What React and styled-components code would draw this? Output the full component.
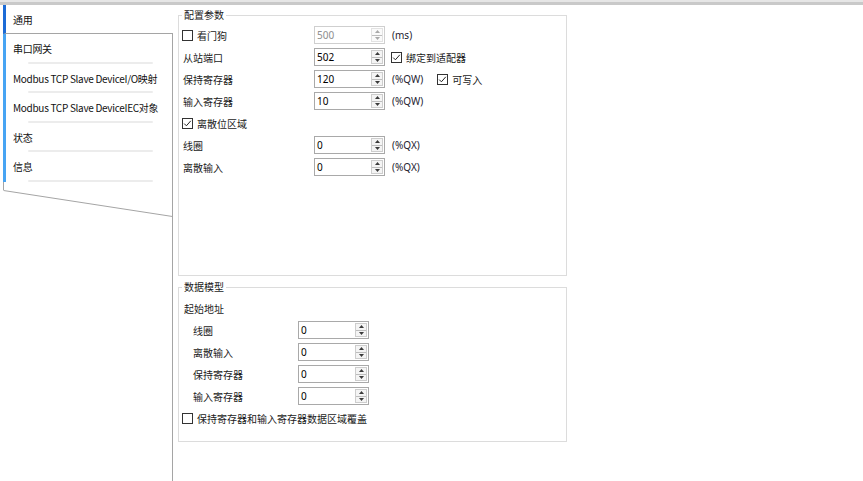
import React from "react";
import styled, { createGlobalStyle } from "styled-components";

const Global = createGlobalStyle`
  html, body { margin: 0; padding: 0; background: #fff; }
  body {
    font-family: "Noto Sans", "Noto Sans CJK SC", sans-serif;
    font-size: 10px;
    color: #1a1a1a;
  }
`;

const Page = styled.div`
  width: 863px;
  height: 481px;
  display: flex;
  flex-direction: column;
  overflow: hidden;
  background: #fff;
`;

const TopBar = styled.div`
  height: 5px;
  flex: none;
  background: linear-gradient(#e6e6e6 0 2px, #c9c9c9 2px);
`;

const Main = styled.div`
  flex: 1;
  display: flex;
  min-height: 0;
`;

const Sidebar = styled.nav`
  width: 173px;
  flex: none;
  box-sizing: border-box;
  padding-left: 3px;
  display: flex;
  flex-direction: column;
  position: relative;
  font-family: "Noto Sans CJK SC", sans-serif;
`;

const Tab = styled.div`
  height: ${(p) => (p.$active ? "29px" : "29.5px")};
  flex: none;
  box-sizing: border-box;
  display: flex;
  align-items: center;
  padding-left: 7px;
  position: relative;
  white-space: nowrap;
  font-size: 10px;
  letter-spacing: -0.3px;
  color: #111;
  border-left: 3px solid ${(p) => (p.$active ? "#1c6bd6" : "#47a4f3")};
  border-right: ${(p) => (p.$active ? "none" : "1px solid #a5a5a5")};
  border-bottom: ${(p) => (p.$active ? "1px solid #a5a5a5" : "none")};

  &::after {
    content: "";
    display: ${(p) => (p.$active ? "none" : "block")};
    position: absolute;
    left: 22px;
    right: 19px;
    bottom: 0;
    height: 2px;
    border-radius: 1px;
    background: #ececec;
  }
`;

const TabFoot = styled.div`
  height: 8.5px;
  flex: none;
  border-left: 1px solid #a5a5a5;
  border-right: 1px solid #a5a5a5;
`;

const Filler = styled.div`
  flex: 1;
  border-right: 1px solid #a5a5a5;
`;

const Slant = styled.svg`
  position: absolute;
  left: 3px;
  top: 185px;
  pointer-events: none;
`;

const Content = styled.section`
  flex: 1;
  box-sizing: border-box;
  padding: 3px 0 0 5px;
  display: flex;
  flex-direction: column;
  font-family: "Noto Sans", "Noto Sans CJK SC", sans-serif;
`;

const Group = styled.fieldset`
  width: 389px;
  height: ${(p) => p.$h}px;
  box-sizing: border-box;
  margin: ${(p) => p.$mt || 0}px 0 0 0;
  padding: ${(p) => p.$pt || 0}px 0 0 3px;
  border: 1px solid #dcdcdc;
  min-width: 0;
`;

const Legend = styled.legend`
  padding: 0 2px;
  font-size: 10px;
  line-height: 14px;
  color: #1a1a1a;
`;

const Row = styled.div`
  display: grid;
  grid-template-columns: ${(p) => p.$col}px 71px auto;
  align-items: center;
  height: 22px;
`;

const Label = styled.span`
  padding-left: ${(p) => p.$indent || 1}px;
  font-size: 10px;
  white-space: nowrap;
`;

const After = styled.div`
  display: flex;
  align-items: center;
  gap: 14px;
  margin-left: ${(p) => p.$ml ?? 7}px;
`;

const Unit = styled.span`
  font-size: 10px;
  color: #1d2230;
  white-space: nowrap;
`;

const CheckWrap = styled.label`
  display: inline-flex;
  align-items: center;
  gap: 4px;
  font-size: 10px;
  white-space: nowrap;
`;

const Box = styled.span`
  width: 11px;
  height: 11px;
  box-sizing: border-box;
  border: 1px solid #333;
  background: #fff;
  display: inline-flex;
  align-items: center;
  justify-content: center;
  flex: none;
`;

const Spin = styled.div`
  width: 71px;
  height: 18px;
  box-sizing: border-box;
  display: flex;
  border: 1px solid ${(p) => (p.$disabled ? "#cfcfcf" : "#a9a9a9")};
  background: #fff;
`;

const SpinValue = styled.div`
  flex: 1;
  display: flex;
  align-items: center;
  padding-left: 2px;
  font-size: 10px;
  color: ${(p) => (p.$disabled ? "#8e8e8e" : "#000")};
`;

const SpinButtons = styled.div`
  width: 12px;
  margin: 1px;
  box-sizing: border-box;
  display: flex;
  flex-direction: column;
  border: 1px solid ${(p) => (p.$disabled ? "#e2e2e2" : "#cdcdcd")};
  background: ${(p) => (p.$disabled ? "#fafafa" : "#f4f4f4")};
`;

const SpinHalf = styled.div`
  flex: 1;
  display: flex;
  align-items: center;
  justify-content: center;
  & + & {
    border-top: 1px solid ${(p) => (p.$disabled ? "#e2e2e2" : "#bdbdbd")};
  }
`;

const Group2Body = styled.div`
  display: flex;
  flex-direction: column;
`;

const Arrow = ({ up, disabled }) => (
  <svg width="5" height="3" viewBox="0 0 5 3">
    <path
      d={up ? "M0 3 L2.5 0 L5 3 Z" : "M0 0 L2.5 3 L5 0 Z"}
      fill={disabled ? "#a8a8a8" : "#3a3a3a"}
    />
  </svg>
);

const SpinBox = ({ value, disabled }) => (
  <Spin $disabled={disabled}>
    <SpinValue $disabled={disabled}>{value}</SpinValue>
    <SpinButtons $disabled={disabled}>
      <SpinHalf $disabled={disabled}>
        <Arrow up disabled={disabled} />
      </SpinHalf>
      <SpinHalf $disabled={disabled}>
        <Arrow disabled={disabled} />
      </SpinHalf>
    </SpinButtons>
  </Spin>
);

const Check = ({ checked, children }) => (
  <CheckWrap>
    <Box>
      {checked && (
        <svg width="9" height="9" viewBox="0 0 9 9">
          <path d="M1.2 4.6 L3.4 6.8 L7.8 1.8" stroke="#222" strokeWidth="1" fill="none" />
        </svg>
      )}
    </Box>
    {children}
  </CheckWrap>
);

const tabs = [
  "通用",
  "串口网关",
  "Modbus TCP Slave DeviceI/O映射",
  "Modbus TCP Slave DeviceIEC对象",
  "状态",
  "信息",
];

export default function App() {
  return (
    <Page>
      <Global />
      <TopBar />
      <Main>
        <Sidebar>
          {tabs.map((t, i) => (
            <Tab key={t} $active={i === 0}>
              {t}
            </Tab>
          ))}
          <TabFoot />
          <Filler />
          <Slant width="170" height="28" viewBox="0 0 170 28">
            <line x1="0.5" y1="0.5" x2="169.5" y2="26.5" stroke="#a5a5a5" strokeWidth="1" />
          </Slant>
        </Sidebar>
        <Content>
          <Group $h={268} $pt={2}>
            <Legend>配置参数</Legend>
            <Row $col={132}>
              <Check>看门狗</Check>
              <SpinBox value="500" disabled />
              <After>
                <Unit>(ms)</Unit>
              </After>
            </Row>
            <Row $col={132}>
              <Label>从站端口</Label>
              <SpinBox value="502" />
              <After $ml={6}>
                <Check checked>绑定到适配器</Check>
              </After>
            </Row>
            <Row $col={132}>
              <Label>保持寄存器</Label>
              <SpinBox value="120" />
              <After>
                <Unit>(%QW)</Unit>
                <Check checked>可写入</Check>
              </After>
            </Row>
            <Row $col={132}>
              <Label>输入寄存器</Label>
              <SpinBox value="10" />
              <After>
                <Unit>(%QW)</Unit>
              </After>
            </Row>
            <Row $col={132}>
              <Check checked>离散位区域</Check>
            </Row>
            <Row $col={132}>
              <Label>线圈</Label>
              <SpinBox value="0" />
              <After>
                <Unit>(%QX)</Unit>
              </After>
            </Row>
            <Row $col={132}>
              <Label>离散输入</Label>
              <SpinBox value="0" />
              <After>
                <Unit>(%QX)</Unit>
              </After>
            </Row>
          </Group>
          <Group $h={162} $mt={4} $pt={3}>
            <Legend>数据模型</Legend>
            <Group2Body>
              <Row $col={116}>
                <Label $indent={2}>起始地址</Label>
              </Row>
              <Row $col={116}>
                <Label $indent={11}>线圈</Label>
                <SpinBox value="0" />
              </Row>
              <Row $col={116}>
                <Label $indent={11}>离散输入</Label>
                <SpinBox value="0" />
              </Row>
              <Row $col={116}>
                <Label $indent={11}>保持寄存器</Label>
                <SpinBox value="0" />
              </Row>
              <Row $col={116}>
                <Label $indent={11}>输入寄存器</Label>
                <SpinBox value="0" />
              </Row>
              <Row $col={116}>
                <Check>保持寄存器和输入寄存器数据区域覆盖</Check>
              </Row>
            </Group2Body>
          </Group>
        </Content>
      </Main>
    </Page>
  );
}
